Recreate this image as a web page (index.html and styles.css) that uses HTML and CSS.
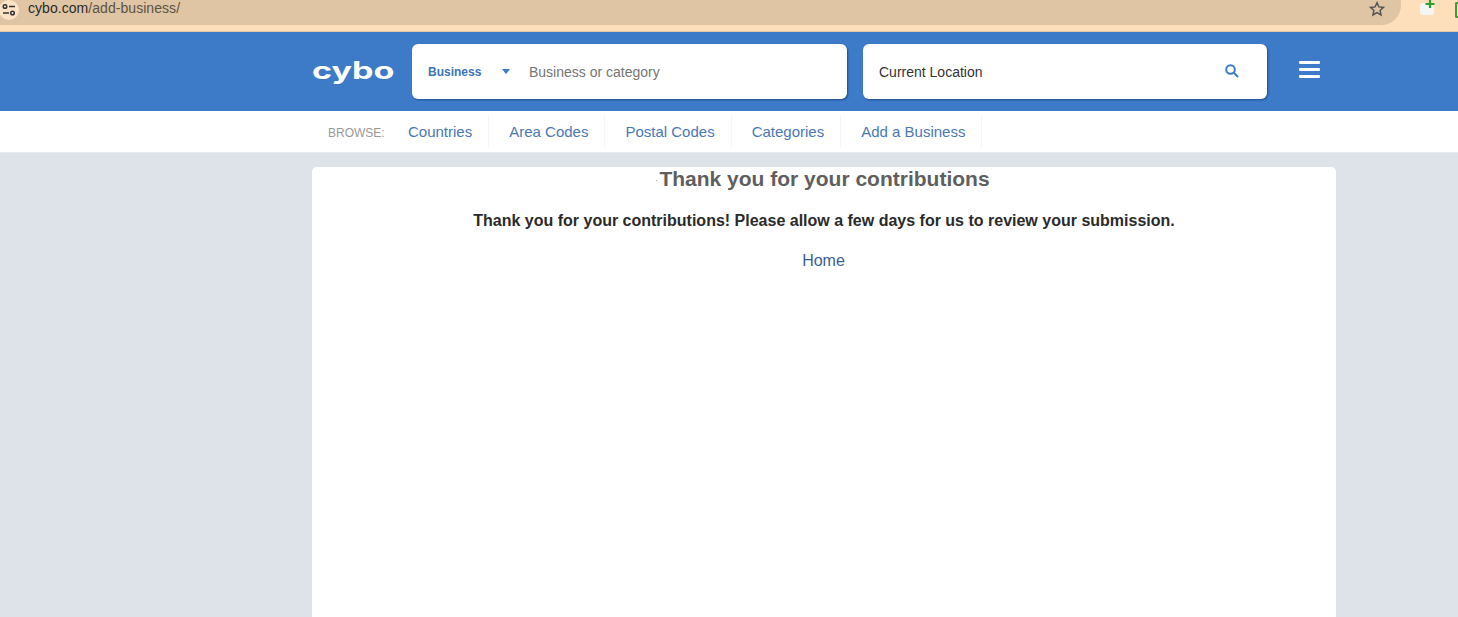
FILE: index.html
```html
<!DOCTYPE html>
<html lang="en">
<head>
  <meta charset="UTF-8">
  <meta name="viewport" content="width=device-width, initial-scale=1.0">
  <title>Add a Business - Cybo</title>
  <link rel="stylesheet" href="styles.css">
</head>
<body>
  <div class="browser-bar">
    <div class="url-pill">
      <span class="site-info">
        <svg width="14" height="12" viewBox="0 0 14 12" fill="none" stroke="#333" stroke-width="1.500">
          <circle cx="3" cy="2.500" r="1.800"/>
          <path d="M7 2.500h6M1 9h6"/>
          <circle cx="10.500" cy="9" r="1.800"/>
        </svg>
      </span>
      <span class="url-text">cybo.com<span class="url-path">/add-business/</span></span>
      <svg class="star" width="16" height="16" viewBox="0 0 24 24" fill="none" stroke="#555" stroke-width="2.200">
        <path d="M12 2.500l2.900 6.400 6.900.7-5.200 4.600 1.500 6.800-6.100-3.500-6.100 3.500 1.500-6.800-5.200-4.600 6.900-.7z"/>
      </svg>
    </div>
    <div class="ext-icons">
      <svg width="20" height="16" viewBox="0 0 20 16">
        <rect x="1" y="3" width="14" height="12" rx="3" fill="#f5f5f2"/>
        <path d="M6.500 4h9M11 0v8" stroke="#2e9e2e" stroke-width="2.200"/>
      </svg>
      <span class="ext-green"></span>
    </div>
  </div>

  <header class="top-header">
    <div class="header-inner">
      <a class="logo" href="#">cybo</a>
      <div class="search-box search-what">
        <span class="search-type">Business</span>
        <span class="caret"></span>
        <span class="search-placeholder">Business or category</span>
      </div>
      <div class="search-box search-where">
        <span class="search-location">Current Location</span>
        <svg class="search-icon" width="14" height="14" viewBox="0 0 14 14" fill="none" stroke="#3d7bc9" stroke-width="2">
          <circle cx="5.500" cy="5.500" r="4.300"/>
          <path d="M8.800 8.800l4.200 4.200"/>
        </svg>
      </div>
      <div class="menu-btn"><span></span><span></span><span></span></div>
    </div>
  </header>

  <nav class="browse-nav">
    <div class="browse-inner">
      <span class="browse-label">BROWSE:</span>
      <a href="#">Countries</a>
      <a href="#">Area Codes</a>
      <a href="#">Postal Codes</a>
      <a href="#">Categories</a>
      <a href="#">Add a Business</a>
    </div>
  </nav>

  <main class="card">
    <h1><span class="stray-dot"></span>Thank you for your contributions</h1>
    <p class="thanks">Thank you for your contributions! Please allow a few days for us to review your submission.</p>
    <p class="home"><a href="#">Home</a></p>
  </main>
</body>
</html>
```

FILE: styles.css
```css
body {
  margin: 0;
  height: 100vh;
  display: flex;
  flex-direction: column;
  overflow: hidden;
  font-family: 'Liberation Sans', Arial, sans-serif;
  background-color: #dee3ea;
  color: #222;
}
a {
  text-decoration: none;
}

/* browser chrome */
.browser-bar {
  height: 31px;
  flex-shrink: 0;
  background-color: #fddfbc;
  border-bottom: 1px solid #e5c9a6;
  display: flex;
}
.url-pill {
  width: 1401px;
  height: 25px;
  background-color: #dfc5a3;
  border-radius: 0 0 20px 0;
  display: flex;
  align-items: center;
  flex-shrink: 0;
}
.site-info {
  width: 20px;
  height: 20px;
  margin-left: -1px;
  margin-top: -6px;
  border-radius: 50%;
  background-color: #fce3c6;
  display: flex;
  align-items: center;
  justify-content: center;
}
.url-text {
  margin-left: 9px;
  margin-top: -9px;
  font-size: 14px;
  letter-spacing: 0.05px;
  color: #2a2a2a;
}
.url-path {
  color: #5c5346;
}
.star {
  margin-left: auto;
  margin-right: 16px;
  margin-top: -8px;
}
.ext-icons {
  flex: 1;
  display: flex;
  padding-left: 18px;
  gap: 16px;
  overflow: hidden;
}
.ext-icons svg {
  flex-shrink: 0;
}
.ext-green {
  width: 4px;
  height: 12px;
  margin-top: 2px;
  border: 2px solid #3f9e2f;
  border-right: none;
  border-radius: 2px 0 0 2px;
}

/* blue header */
.top-header {
  height: 79px;
  flex-shrink: 0;
  background-color: #3d7bc9;
}
.header-inner {
  width: 1024px;
  margin-left: 312px;
  display: flex;
  align-items: flex-start;
}
.logo {
  width: 100px;
  margin-top: 23px;
  color: #fff;
  font-family: 'Inter', sans-serif;
  font-weight: 700;
  font-size: 24px;
  line-height: 32px;
  transform: scaleX(1.42);
  transform-origin: left center;
}
.search-box {
  height: 55px;
  margin-top: 12px;
  background-color: #fff;
  border-radius: 6px;
  box-shadow: 1px 1px 2px rgba(20, 60, 110, 0.7);
  display: flex;
  align-items: center;
  box-sizing: border-box;
  font-size: 14px;
}
.search-what {
  width: 435px;
  padding-left: 16px;
}
.search-where {
  width: 404px;
  margin-left: 16px;
  padding-left: 16px;
  color: #333;
}
.search-type {
  width: 74px;
  font-size: 12px;
  font-weight: bold;
  color: #3d74b8;
}
.caret {
  width: 0;
  height: 0;
  border-left: 4px solid transparent;
  border-right: 4px solid transparent;
  border-top: 5px solid #3d7bc9;
}
.search-placeholder {
  margin-left: 19px;
  color: #757575;
}
.search-icon {
  margin-left: auto;
  margin-right: 28px;
  margin-top: -2px;
}
.menu-btn {
  margin-left: 32px;
  margin-top: 29px;
  width: 21px;
  display: flex;
  flex-direction: column;
  gap: 4px;
}
.menu-btn span {
  height: 3px;
  background-color: #fff;
  border-radius: 1px;
}

/* browse links */
.browse-nav {
  height: 41px;
  flex-shrink: 0;
  background-color: #fff;
  border-bottom: 1px solid #e6e9ee;
}
.browse-inner {
  margin-left: 312px;
  padding-left: 16px;
  display: flex;
  align-items: flex-start;
}
.browse-label {
  width: 60px;
  margin-top: 15px;
  font-size: 12px;
  color: #999;
}
.browse-inner a {
  height: 33px;
  margin-top: 4px;
  line-height: 33px;
  padding: 0 16px 0 20px;
  border-right: 1px solid #f5f6f7;
  font-size: 15px;
  color: #4a78b5;
}

/* main card */
.card {
  flex: 1;
  width: 1024px;
  margin: 14px 0 0 312px;
  background-color: #fff;
  border-radius: 5px 5px 0 0;
  text-align: center;
}
.card h1 {
  margin: 0;
  padding-left: 1px;
  font-size: 21px;
  line-height: 24px;
  color: #5f5f5f;
}
.stray-dot {
  display: inline-block;
  width: 1px;
  height: 1px;
  margin: 0 2px 5px -3px;
  background-color: #aaa;
}
.thanks {
  margin: 19px 0 0;
  font-size: 16px;
  line-height: 22px;
  font-weight: bold;
  color: #2b2b2b;
}
.home {
  margin: 18px 0 0;
  font-size: 16px;
  line-height: 22px;
  padding-right: 1px;
}
.home a {
  color: #3a5f94;
}
```
